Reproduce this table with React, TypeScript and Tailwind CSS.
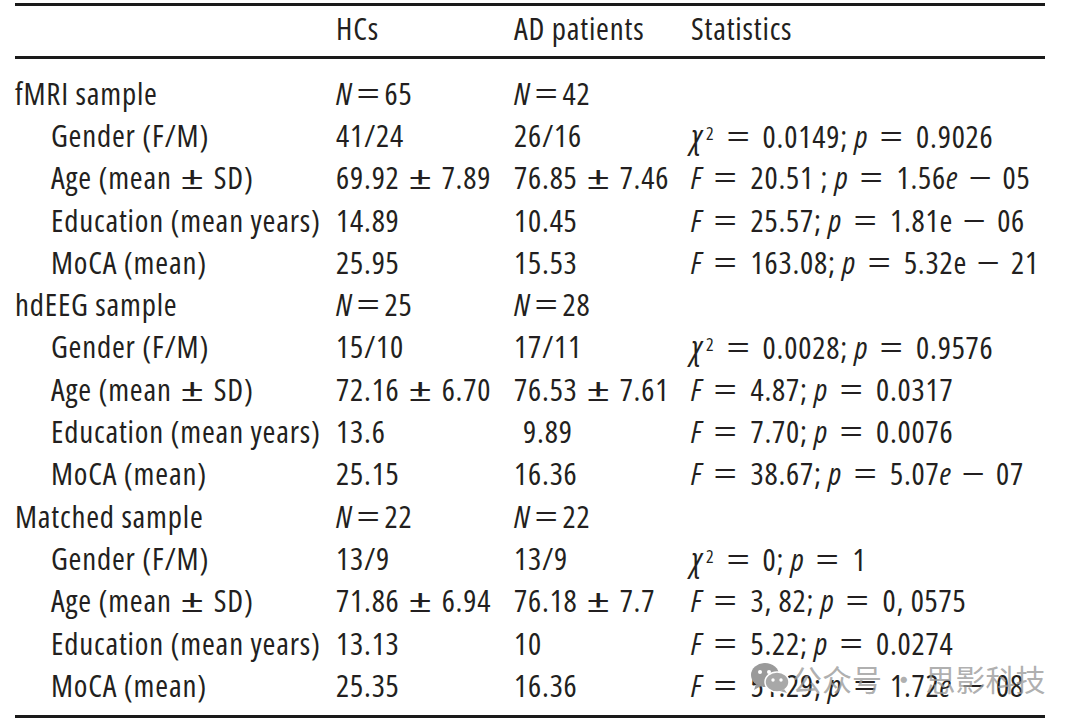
import React from "react";

type Row = {
  label: React.ReactNode;
  group?: boolean;
  hc: React.ReactNode;
  ad: React.ReactNode;
  stat?: React.ReactNode;
};

// wide math-style operators
const Op = ({ c, m }: { c: string; m: string }) => (
  <span className={`inline-block scale-x-[1.7] ${m}`}>{c}</span>
);

const N = ({ v }: { v: number }) => (
  <span>
    <i>N</i>
    <Op c="=" m="mx-[9px]" />
    {v}
  </span>
);

const Eq = () => <Op c="=" m="mx-[17px]" />;
const Pm = () => <Op c="±" m="mx-[14px]" />;
const Minus = () => <Op c="−" m="mx-[15px]" />;

const Chi = () => (
  <span>
    <i className="text-[33px]">χ</i>
    <sup className="relative -top-[8px] ml-[3px] text-[18px]">2</sup>
  </span>
);

const age = (
  <>
    Age (mean
    <Pm />
    SD)
  </>
);

const rows: Row[] = [
  { label: "fMRI sample", group: true, hc: <N v={65} />, ad: <N v={42} /> },
  {
    label: "Gender (F/M)",
    hc: "41/24",
    ad: "26/16",
    stat: (
      <>
        <Chi />
        <Eq />
        0.0149; <i>p</i>
        <Eq />
        0.9026
      </>
    ),
  },
  {
    label: age,
    hc: (
      <>
        69.92
        <Pm />
        7.89
      </>
    ),
    ad: (
      <>
        76.85
        <Pm />
        7.46
      </>
    ),
    stat: (
      <>
        <i>F</i>
        <Eq />
        20.51 ; <i>p</i>
        <Eq />
        1.56<i>e</i>
        <Minus />
        05
      </>
    ),
  },
  {
    label: "Education (mean years)",
    hc: "14.89",
    ad: "10.45",
    stat: (
      <>
        <i>F</i>
        <Eq />
        25.57; <i>p</i>
        <Eq />
        1.81e
        <Minus />
        06
      </>
    ),
  },
  {
    label: "MoCA (mean)",
    hc: "25.95",
    ad: "15.53",
    stat: (
      <>
        <i>F</i>
        <Eq />
        163.08; <i>p</i>
        <Eq />
        5.32e
        <Minus />
        21
      </>
    ),
  },
  { label: "hdEEG sample", group: true, hc: <N v={25} />, ad: <N v={28} /> },
  {
    label: "Gender (F/M)",
    hc: "15/10",
    ad: "17/11",
    stat: (
      <>
        <Chi />
        <Eq />
        0.0028; <i>p</i>
        <Eq />
        0.9576
      </>
    ),
  },
  {
    label: age,
    hc: (
      <>
        72.16
        <Pm />
        6.70
      </>
    ),
    ad: (
      <>
        76.53
        <Pm />
        7.61
      </>
    ),
    stat: (
      <>
        <i>F</i>
        <Eq />
        4.87; <i>p</i>
        <Eq />
        0.0317
      </>
    ),
  },
  {
    label: "Education (mean years)",
    hc: "13.6",
    ad: <span className="pl-[9px]">9.89</span>,
    stat: (
      <>
        <i>F</i>
        <Eq />
        7.70; <i>p</i>
        <Eq />
        0.0076
      </>
    ),
  },
  {
    label: "MoCA (mean)",
    hc: "25.15",
    ad: "16.36",
    stat: (
      <>
        <i>F</i>
        <Eq />
        38.67; <i>p</i>
        <Eq />
        5.07<i>e</i>
        <Minus />
        07
      </>
    ),
  },
  { label: "Matched sample", group: true, hc: <N v={22} />, ad: <N v={22} /> },
  {
    label: "Gender (F/M)",
    hc: "13/9",
    ad: "13/9",
    stat: (
      <>
        <Chi />
        <Eq />
        0; <i>p</i>
        <Eq />1
      </>
    ),
  },
  {
    label: age,
    hc: (
      <>
        71.86
        <Pm />
        6.94
      </>
    ),
    ad: (
      <>
        76.18
        <Pm />
        7.7
      </>
    ),
    stat: (
      <>
        <i>F</i>
        <Eq />
        3, 82; <i>p</i>
        <Eq />
        0, 0575
      </>
    ),
  },
  {
    label: "Education (mean years)",
    hc: "13.13",
    ad: "10",
    stat: (
      <>
        <i>F</i>
        <Eq />
        5.22; <i>p</i>
        <Eq />
        0.0274
      </>
    ),
  },
  {
    label: "MoCA (mean)",
    hc: "25.35",
    ad: "16.36",
    stat: (
      <>
        <i>F</i>
        <Eq />
        51.29; <i>p</i>
        <Eq />
        1.72<i>e</i>
        <Minus />
        08
      </>
    ),
  },
];

const grid = "grid grid-cols-[321px_178px_177px_1fr] items-center whitespace-nowrap";

function WeChatIcon() {
  return (
    <svg width="40" height="32" viewBox="0 0 40 32">
      <ellipse cx="15" cy="13" rx="14" ry="12" fill="#9a9a9a" />
      <path d="M6 22 L4 28 L11 24 Z" fill="#9a9a9a" />
      <circle cx="10" cy="10" r="2" fill="#fff" />
      <circle cx="19" cy="10" r="2" fill="#fff" />
      <ellipse cx="27" cy="20" rx="12" ry="10" fill="#a8a8a8" stroke="#fff" strokeWidth="1.5" />
      <path d="M34 27 L37 31 L30 29 Z" fill="#a8a8a8" />
      <circle cx="23" cy="18" r="1.7" fill="#fff" />
      <circle cx="31" cy="18" r="1.7" fill="#fff" />
    </svg>
  );
}

export default function App() {
  return (
    <div className="relative w-[1080px] h-[724px] bg-white text-[#231f20] text-[31px] tracking-[0.8px] font-['Open_Sans',sans-serif] font-stretch-condensed overflow-hidden">
      <div className="ml-[15px] mr-[35px] pt-[3px]">
        <div className="border-t-[3px] border-b-[3px] border-[#1a1a1a]">
          <div className={`${grid} h-[50px] pb-[6px] leading-none`}>
            <div />
            <div>HCs</div>
            <div>AD patients</div>
            <div>Statistics</div>
          </div>
        </div>
        <div className="pt-[13px] pb-[9px] border-b-[3px] border-[#1a1a1a]">
          {rows.map((r, i) => (
            <div key={i} className={`${grid} h-[42.3px] leading-none`}>
              <div className={r.group ? "" : "pl-[36px]"}>{r.label}</div>
              <div>{r.hc}</div>
              <div>{r.ad}</div>
              <div>{r.stat}</div>
            </div>
          ))}
        </div>
      </div>

      {/* watermark */}
      <div className="absolute left-[750px] top-[662px] flex items-center gap-[2px] text-[30px] tracking-normal text-[#9a9a9a]/80 leading-none font-['Noto_Sans_CJK_SC',sans-serif] font-stretch-normal">
        <WeChatIcon />
        <span>公众号 · 思影科技</span>
      </div>
    </div>
  );
}
